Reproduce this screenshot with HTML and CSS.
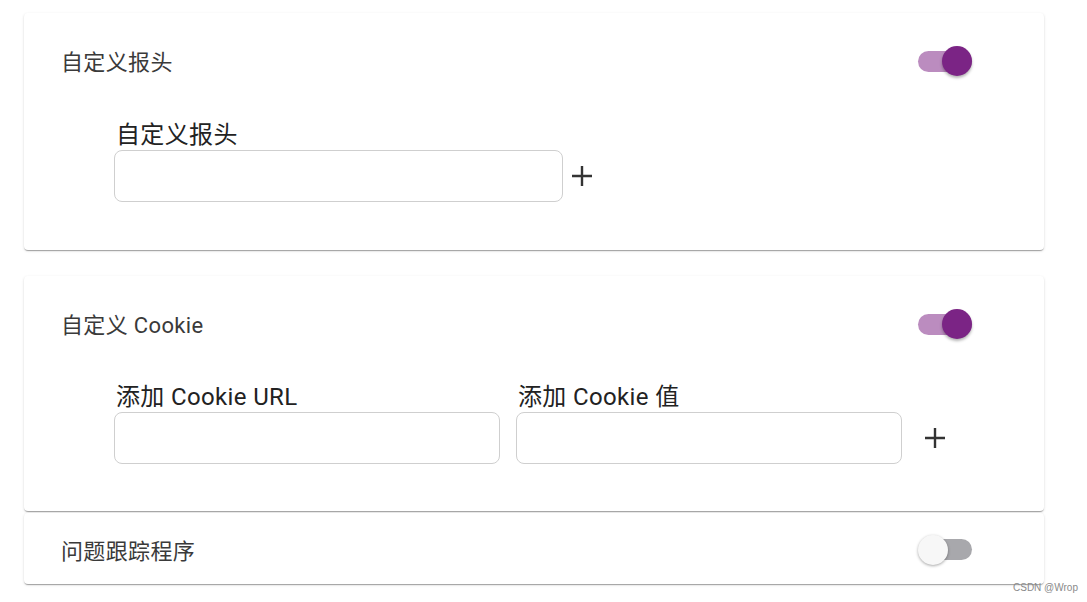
FILE: index.html
```html
<!DOCTYPE html>
<html lang="zh">
<head>
<meta charset="utf-8">
<link rel="stylesheet" href="styles.css">
</head>
<body>
<div class="page">
  <section class="card card-first">
    <div class="head">
      <span class="title">自定义报头</span>
      <span class="toggle on"><span class="track"></span><span class="thumb"></span></span>
    </div>
    <div class="body">
      <div class="row">
        <div class="field wide">
          <label class="label">自定义报头</label>
          <div class="input"></div>
        </div>
        <span class="plus plus-near"><svg viewBox="0 0 22 22" width="22" height="22"><path d="M11 1v20M1 11h20" stroke="#333" stroke-width="2.4" fill="none"/></svg></span>
      </div>
    </div>
  </section>

  <section class="card card-second">
    <div class="head">
      <span class="title">自定义 Cookie</span>
      <span class="toggle on"><span class="track"></span><span class="thumb"></span></span>
    </div>
    <div class="body body-second">
      <div class="row">
        <div class="field half">
          <label class="label">添加 Cookie URL</label>
          <div class="input"></div>
        </div>
        <div class="field half">
          <label class="label">添加 Cookie 值</label>
          <div class="input"></div>
        </div>
        <span class="plus plus-far"><svg viewBox="0 0 22 22" width="22" height="22"><path d="M11 1v20M1 11h20" stroke="#333" stroke-width="2.4" fill="none"/></svg></span>
      </div>
    </div>
  </section>

  <section class="card card-third">
    <div class="head head-third">
      <span class="title">问题跟踪程序</span>
      <span class="toggle off"><span class="track"></span><span class="thumb"></span></span>
    </div>
  </section>
</div>
<div class="watermark">CSDN @Wrop</div>
</body>
</html>
```
FILE: styles.css
```css
html, body {
  margin: 0;
  padding: 0;
  background: #fff;
}
body {
  font-family: Roboto, "Noto Sans CJK SC", sans-serif;
  width: 1087px;
  height: 602px;
  overflow: hidden;
  position: relative;
}
.page {
  padding: 13px 0 0 24px;
  width: 1020px;
}
.card {
  background: #fff;
  border-radius: 4px;
  box-shadow: 0 2px 1px -1px rgba(0,0,0,.2), 0 1px 1px 0 rgba(0,0,0,.14), 0 1px 3px 0 rgba(0,0,0,.12);
}
.card-second {
  margin-top: 26px;
}
.card-third {
  margin-top: 2px;
}
.head {
  height: 98px;
  box-sizing: border-box;
  padding: 0 72px 4px 37px;
  display: flex;
  align-items: center;
  justify-content: space-between;
}
.head .toggle {
  margin-top: 2px;
}
.head-third {
  height: 71px;
  padding-top: 1px;
  padding-bottom: 1px;
}
.head-third .toggle {
  margin-top: 0;
}
.title {
  font-size: 22px;
  color: #3a3a3a;
  letter-spacing: 0.35px;
}
.toggle {
  position: relative;
  width: 54px;
  height: 30px;
  display: block;
}
.track {
  position: absolute;
  left: 0;
  right: 0;
  top: 5px;
  height: 21px;
  border-radius: 11px;
  background: #bb8cbf;
}
.thumb {
  position: absolute;
  top: 0;
  right: 0;
  width: 30px;
  height: 30px;
  border-radius: 50%;
  background: #7b2485;
  box-shadow: 0 2px 3px rgba(0,0,0,.3);
}
.toggle.off .track {
  left: 2px;
  background: #a8a8ac;
}
.toggle.off .thumb {
  right: auto;
  left: 0;
  top: 1px;
  background: #f7f7f7;
  box-shadow: 0 1px 3px rgba(0,0,0,.35);
}
.body {
  padding: 11px 0 48px 90px;
}
.body-second {
  padding-top: 10px;
  padding-bottom: 47px;
}
.row {
  display: flex;
  align-items: flex-end;
}
.field {
  display: flex;
  flex-direction: column;
  gap: 2px;
}
.wide { width: 449px; }
.half { width: 386px; }
.half + .half { margin-left: 16px; }
.label {
  font-size: 24px;
  line-height: 26px;
  color: #222;
  padding-left: 2px;
  letter-spacing: 0.35px;
}
.input {
  height: 50px;
  border: 1px solid #cfcfcf;
  border-radius: 8px;
  background: #fff;
}
.plus {
  display: flex;
  height: 52px;
  align-items: center;
}
.plus-near { margin-left: 8px; }
.plus-far { margin-left: 22px; }
.watermark {
  position: absolute;
  left: 1013px;
  top: 582px;
  font-family: "Liberation Sans", sans-serif;
  font-size: 10px;
  color: #8a8a8a;
}
```
